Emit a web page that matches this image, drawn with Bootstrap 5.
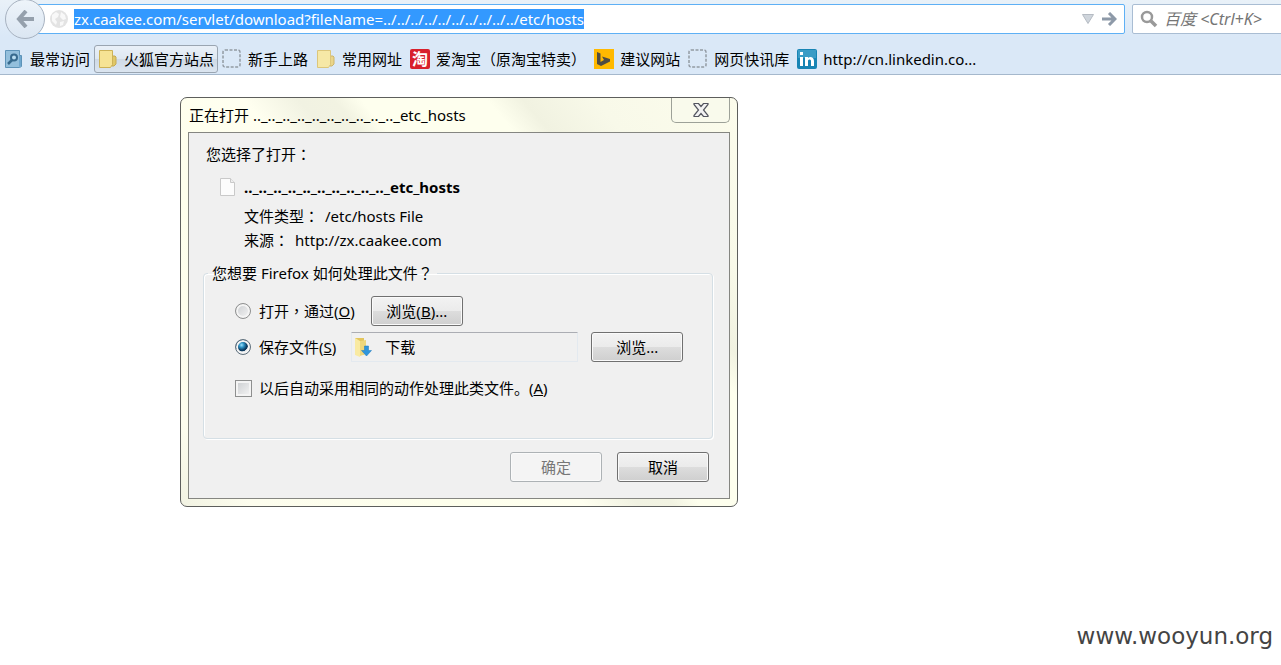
<!DOCTYPE html>
<html lang="zh-CN">
<head>
<meta charset="utf-8">
<meta name="viewport" content="width=device-width, initial-scale=1">
<title>正在打开 etc_hosts</title>
<link rel="stylesheet" href="https://cdn.jsdelivr.net/npm/bootstrap@5.3.0/dist/css/bootstrap.min.css">
<style>
  body { font-family: "Noto Sans", "Noto Sans CJK SC", sans-serif; font-size: 15px; line-height: 20px; color: #000; background: #fff; overflow-x: hidden; }
  .mid-punct { font-family: "Noto Sans CJK TC", sans-serif; line-height: 1; }
  .browser-bar { height: 75px; background: linear-gradient(#e9f1f8, #dae8f7 50%, #dae8f7); border-bottom: 1px solid #a5b8cc; }
  .address-row { height: 38px; padding-left: 5px; }
  .back-btn { width: 40px; height: 40px; border: 1px solid #a7b2c0; border-radius: 50%; background: linear-gradient(#eef4fa, #dbe6f2); z-index: 1; }
  .url-box { height: 30px; border: 1px solid #5eb0f5; border-radius: 2px; background: #fff; margin-left: -8px; margin-right: 7px; padding: 0 7px 0 12px; }
  .url-box input, .search-box input { border: 0; outline: 0; padding: 0; background: none; min-width: 0; height: 20px; line-height: 20px; color: #000; }
  .url-box input { margin-left: 6px; }
  .url-box input::selection { background: #3399ff; color: #fff; }
  .search-box { height: 30px; width: 157px; flex: none; margin-right: -8px; border: 1px solid #a9bdd3; border-radius: 2px; background: #fff; padding-left: 7px; }
  .search-box input { width: 120px; margin-left: 6px; font-style: italic; font-size: 16px; }
  .search-box input::placeholder { color: #757575; opacity: 1; }
  .bookmark-row { height: 28px; margin-top: 7px; }
  .bookmark { display: flex; align-items: center; gap: 6px; height: 28px; padding: 0 3px; border: 1px solid transparent; border-radius: 3px; color: #000; text-decoration: none; white-space: nowrap; }
  .bookmark.hovered { border-color: #9aa5b1; background: linear-gradient(#e9f0f8, #dfe8f1 48%, #cfdae6 52%, #dbe5f0); }
  svg { display: block; flex: none; }
  .plain-btn { border: 0; background: none; padding: 0; }

  .dialog-frame { width: 558px; max-width: 100%; margin: 22px 0 0 180px; padding: 0 7px 7px; border: 1px solid #5d5e5c; border-radius: 7px;
    background: linear-gradient(50deg, #f1f2e2 0, #fdfdee 8%, #feffec 30%, #fffff0 45%, #f1f2e2 51%, #f2f3e2 55%, #feffee 58%, #feffee 72%, #f1f2e1 76%, #f8f9e9 84%, #fcfcec 100%); }
  .dialog-title { height: 34px; font-size: 15px; line-height: 20px; padding-left: 1px; }
  .close-btn { width: 59px; height: 25px; border: 1px solid #9da198; border-top: 0; border-radius: 0 0 5px 5px; background: #f9faec; padding: 0; }
  .dialog-content { border: 1px solid #858681; background: #f0f0f0; padding: 11px 16px 16px 15px; }
  .lead-text { padding-left: 2px; }
  .file-info { padding-left: 15px; margin-top: 13px; }
  .file-info svg { margin-right: 7px; }
  .file-info dl { padding-left: 25px; margin: 9px 0 0; }
  .file-info dl > div { gap: 6px; }
  .action-group { border: 1px solid #d5dfe5; border-radius: 4px; box-shadow: inset 1px 1px #fff, 1px 1px #fff; margin-left: -1px; padding: 13px 28px 40px 31px; margin-top: 13px; }
  .action-group legend { float: none; width: auto; margin: 0 0 0 -27px; padding: 0 4px; font-size: 15px; line-height: 20px; }
  .save-row { margin-top: 6px; }
  .win-btn { width: 92px; height: 30px; padding: 0; border: 1px solid #707070; border-radius: 3px; color: #000; background: linear-gradient(#f2f2f2, #ebebeb 49%, #dddddd 50%, #cfcfcf); box-shadow: inset 0 0 0 1px #fafafa; font-size: 15px; line-height: 20px; }
  .win-btn:disabled { color: #777; border-color: #adb2b5; background: #f4f4f4; }
  .pick { appearance: none; flex: none; width: 16px; height: 16px; margin: 0 8px 0 0; border: 1px solid #8e8f8f; box-shadow: inset 0 0 0 2px #f4f4f4; background: linear-gradient(135deg, #c9cccf, #f6f6f6); }
  .pick[type=radio] { border-radius: 50%; }
  .pick[type=radio]:checked { border-color: #5e6f7c; box-shadow: inset 0 0 0 2px #f4f4f4; background: radial-gradient(circle at 40% 36%, #9fe2fb 0, #2b91c4 20%, #0d3b60 42%, #0d3b60 50%, #d9dfe3 54%); }
  .pick[type=checkbox] { width: 17px; height: 17px; margin-right: 7px; }
  .folder-box { width: 227px; height: 30px; border: 1px solid #e3e9ef; border-top-color: #abadb3; border-radius: 1px; padding-left: 2px; gap: 13px; margin-left: 15px; margin-right: 13px; }
  .dialog-actions { gap: 15px; margin-top: 13px; }
  .watermark { font-family: "DejaVu Sans", sans-serif; font-size: 23px; line-height: 28px; color: #444; padding: 0 8px 15px 0; }
</style>
</head>
<body>
<div class="d-flex flex-column min-vh-100">
  <header class="browser-bar">
    <div class="address-row d-flex align-items-center">
      <button type="button" class="back-btn position-relative d-flex align-items-center justify-content-center p-0 flex-shrink-0" aria-label="后退">
        <svg width="18" height="18" viewBox="0 0 18 18" fill="none" stroke="#95a0ac" stroke-width="4"><path d="M10 1 3 9l7 8M3 9h15"/></svg>
      </button>
      <div class="url-box d-flex align-items-center flex-grow-1">
        <svg width="18" height="18" viewBox="0 0 18 18"><circle cx="9" cy="9" r="9" fill="#e3e3e3"/><path d="M2 5l4-3 3 2-1 3-3 2 2 3-1 3-4-4zM11 2l4 3 1 4-3 1-3-3zM10 12l4-1-1 4-3 1z" fill="#f8f8f8"/></svg>
        <input id="url" class="flex-grow-1" type="text" aria-label="网址" spellcheck="false" value="zx.caakee.com/servlet/download?fileName=../../../../../../../../../../etc/hosts">
        <button type="button" class="plain-btn" aria-label="历史"><svg width="12" height="10" viewBox="0 0 12 10"><path d="M.5.5h11L6 9.500z" fill="#cfd5dc" stroke="#b5bbc3"/></svg></button>
        <button type="button" class="plain-btn ms-2" aria-label="转到"><svg width="15" height="14" viewBox="0 0 15 14" fill="none" stroke="#8d99a8" stroke-width="3"><path d="M0 7h12M7 1l6 6-6 6"/></svg></button>
      </div>
      <div class="search-box d-flex align-items-center">
        <svg width="18" height="18" viewBox="0 0 18 18" fill="none" stroke="#999"><circle cx="7" cy="7" r="5" stroke-width="2.500"/><path d="M11 11l5 5" stroke-width="3.500"/></svg>
        <input type="text" aria-label="搜索" placeholder="百度 &lt;Ctrl+K&gt;">
      </div>
    </div>
    <nav class="bookmark-row d-flex" aria-label="书签">
      <a class="bookmark" href="#"><svg width="20" height="20" viewBox="0 0 20 20"><path d="M1.500 1.500h14v5h2v11l-2 1h-14z" fill="#93bfdc" stroke="#5d93b8"/><path d="M15 7h2v10l-2 1z" fill="#6fa8cf"/><circle cx="10" cy="8.500" r="3" fill="#b7dcf0" stroke="#376a8e" stroke-width="2"/><path d="M8 11l-4 4" stroke="#376a8e" stroke-width="2.500"/></svg><span>最常访问</span></a>
      <a class="bookmark hovered" href="#"><svg width="20" height="20" viewBox="0 0 20 20"><path d="M14 7h3l1 1v7l-2 2h-2z" fill="#e0c766" stroke="#c5aa50"/><path d="M1.500 1.500h13v14l-2 3h-11z" fill="#f6e394" stroke="#cdb256"/></svg><span>火狐官方站点</span></a>
      <a class="bookmark" href="#"><svg width="20" height="20" viewBox="0 0 20 20"><rect x="1" y="1" width="17" height="17" rx="2" fill="none" stroke="#929aa3" stroke-width="1.500" stroke-dasharray="3 1.500"/></svg><span>新手上路</span></a>
      <a class="bookmark" href="#"><svg width="20" height="20" viewBox="0 0 20 20"><path d="M14 7h3l1 1v7l-2 2h-2z" fill="#ead58a" stroke="#cdb56a"/><path d="M1.500 1.500h13v14l-2 3h-11z" fill="#f6e8a6" stroke="#dcc67a"/></svg><span>常用网址</span></a>
      <a class="bookmark" href="#"><svg width="20" height="20" viewBox="0 0 20 20"><rect width="20" height="20" rx="2" fill="#d8202c"/><text x="10" y="16" font-size="16" font-weight="bold" fill="#fff" text-anchor="middle">淘</text></svg><span>爱淘宝<span class="mid-punct" lang="zh-TW">（</span>原淘宝特卖<span class="mid-punct" lang="zh-TW">）</span></span></a>
      <a class="bookmark" href="#"><svg width="20" height="20" viewBox="0 0 20 20"><path d="M0 0h20v20H0z" fill="#ffb900"/><path d="M3 3l3.500 1.500V13L10 11 8 7.500l8 2.500v2.500L7 17l-4-2z" fill="#4f4c43"/></svg><span>建议网站</span></a>
      <a class="bookmark" href="#"><svg width="20" height="20" viewBox="0 0 20 20"><rect x="1" y="1" width="17" height="17" rx="2" fill="none" stroke="#929aa3" stroke-width="1.500" stroke-dasharray="3 1.500"/></svg><span>网页快讯库</span></a>
      <a class="bookmark" href="#"><svg width="20" height="20" viewBox="0 0 20 20"><rect width="20" height="20" rx="2" fill="#1784b4"/><path d="M1 1h18v8H1z" fill="#3a9cc6"/><path d="M3 8h3v9H3zM3 3h3v3H3zM8 8h3v1c2-2 6-1 6 3v5h-3v-5c0-2-3-2-3 0v5H8z" fill="#fff"/></svg><span>http://cn.linkedin.co...</span></a>
    </nav>
  </header>

  <main class="flex-grow-1">
    <section class="dialog-frame" role="dialog" aria-labelledby="dlg-title">
      <div class="d-flex justify-content-between align-items-start">
        <h1 id="dlg-title" class="dialog-title m-0 fw-normal d-flex align-items-center">正在打开 .._.._.._.._.._.._.._.._.._.._etc_hosts</h1>
        <button type="button" class="close-btn d-flex align-items-center justify-content-center" aria-label="关闭"><svg width="16" height="14" viewBox="0 0 16 14"><path d="M1 .5h4.500L8 3.500 10.500.500H15v1L10.500 7l4.500 5.500v1h-4.500L8 10.500l-2.500 3H1v-1L5.500 7 1 1.500z" fill="#f2f2f2" stroke="#53555f" stroke-width="1.200"/></svg></button>
      </div>
      <div class="dialog-content">
        <p class="lead-text m-0">您选择了打开<span class="mid-punct" lang="zh-TW">：</span></p>
        <div class="file-info">
          <div class="d-flex align-items-center fw-bold"><svg width="18" height="20" viewBox="0 0 18 20"><path d="M1.500 1.500h10l4 4v13h-14z" fill="#fcfcfc" stroke="#c9c9c9"/><path d="M11.500 1.500v4h4" fill="#eee" stroke="#c9c9c9"/></svg>.._.._.._.._.._.._.._.._.._.._etc_hosts</div>
          <dl>
            <div class="d-flex mb-1"><dt class="fw-normal">文件类型<span class="mid-punct" lang="zh-TW">：</span></dt><dd class="m-0">/etc/hosts File</dd></div>
            <div class="d-flex"><dt class="fw-normal">来源<span class="mid-punct" lang="zh-TW">：</span></dt><dd class="m-0">http://zx.caakee.com</dd></div>
          </dl>
        </div>
        <fieldset class="action-group">
          <legend>您想要 Firefox 如何处理此文件<span class="mid-punct" lang="zh-TW">？</span></legend>
          <div class="d-flex align-items-center">
            <input class="pick" type="radio" name="act" id="open"><label for="open">打开<span class="mid-punct" lang="zh-TW">，</span>通过(<u>O</u>)</label>
            <button type="button" class="win-btn ms-3">浏览(<u>B</u>)...</button>
          </div>
          <div class="save-row d-flex align-items-center">
            <input class="pick" type="radio" name="act" id="save" checked><label for="save">保存文件(<u>S</u>)</label>
            <div class="folder-box d-flex align-items-center"><svg width="18" height="20" viewBox="0 0 18 20"><path d="M1 1h9v17H1z" fill="#e3c55c"/><path d="M1 1l5 3v16l-5-2z" fill="#f9eaa2"/><path d="M6 4l6-1v14l-6 2z" fill="#efd77c"/><path d="M10.500 9h4v4.500H17.500L12.500 19 7.500 13.500h3z" fill="#2f95dc" stroke="#1a78bd" stroke-width=".5"/></svg><span>下载</span></div>
            <button type="button" class="win-btn">浏览...</button>
          </div>
          <div class="d-flex align-items-center mt-3">
            <input class="pick" type="checkbox" id="always"><label for="always">以后自动采用相同的动作处理此类文件。(<u>A</u>)</label>
          </div>
        </fieldset>
        <div class="dialog-actions d-flex justify-content-end pe-1">
          <button type="button" class="win-btn" disabled>确定</button>
          <button type="button" class="win-btn">取消</button>
        </div>
      </div>
    </section>
  </main>
  <footer class="watermark text-end">www.wooyun.org</footer>
</div>
<script src="https://cdn.jsdelivr.net/npm/bootstrap@5.3.0/dist/js/bootstrap.bundle.min.js"></script>
<script>
  const url = document.getElementById('url');
  url.focus();
  url.select();
</script>
</body>
</html>
